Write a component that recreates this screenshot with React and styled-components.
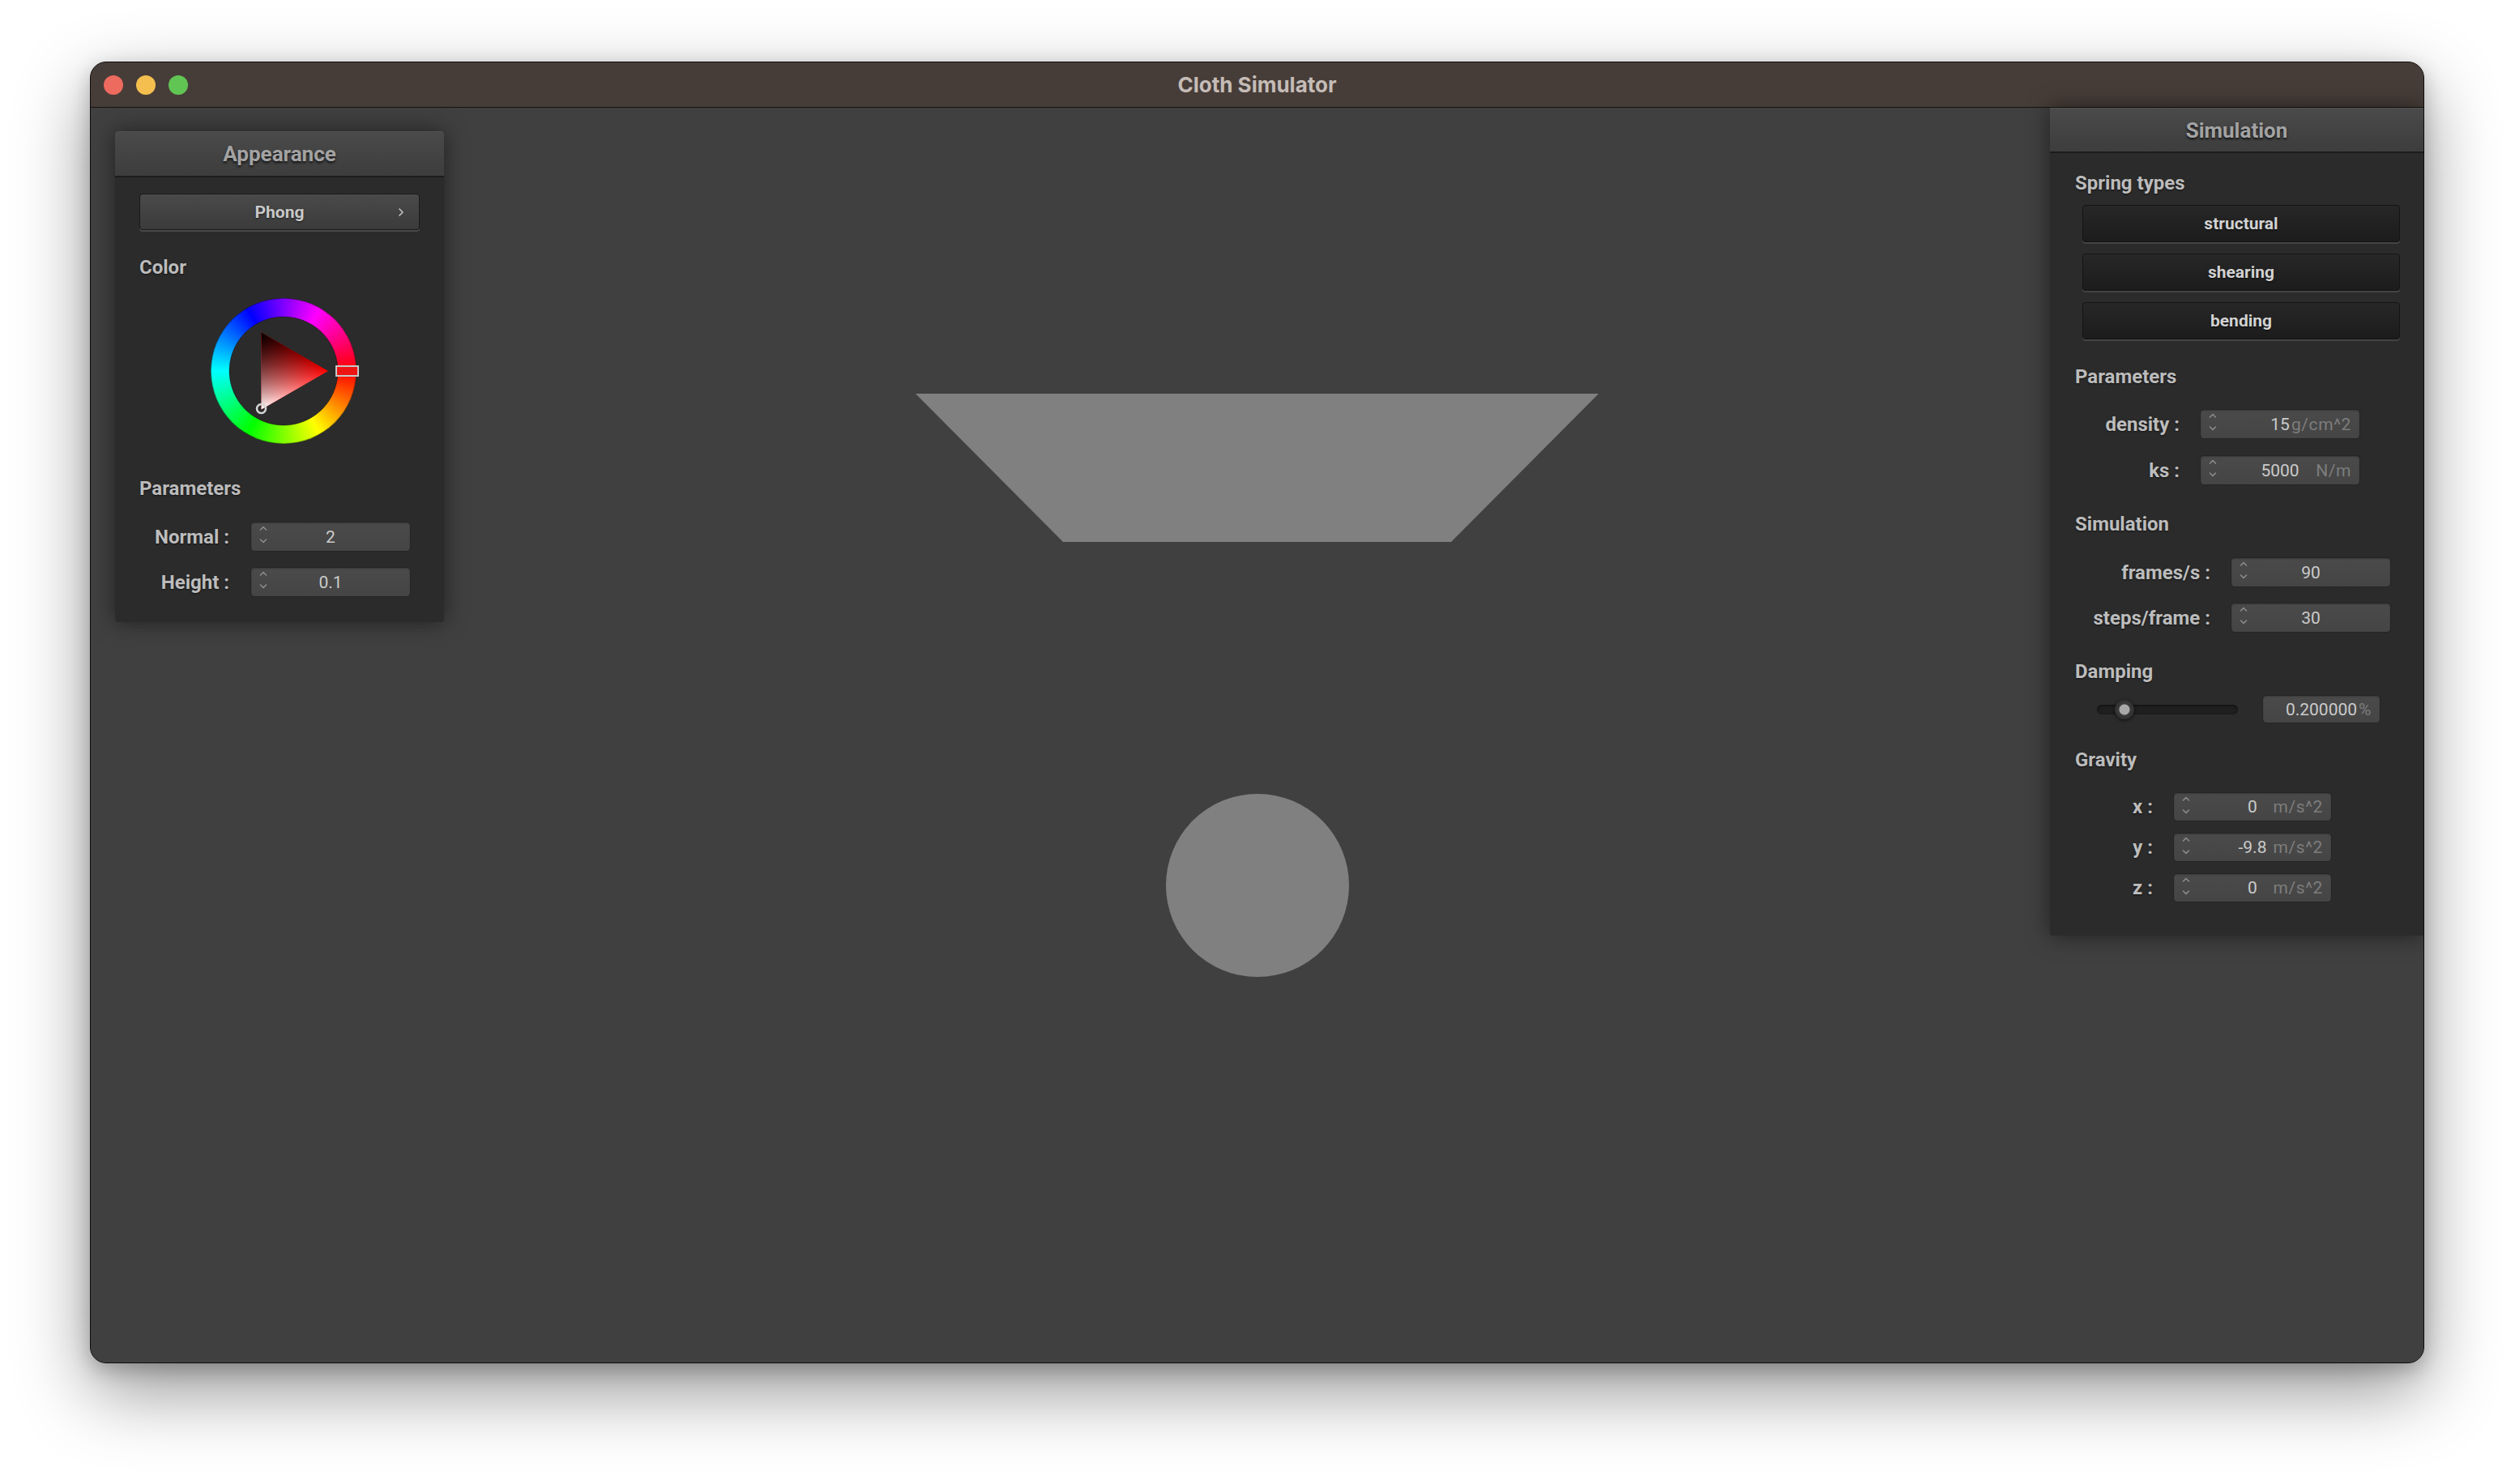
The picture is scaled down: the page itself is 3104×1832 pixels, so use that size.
import React from 'react';
import styled, {createGlobalStyle} from 'styled-components';

const GlobalStyle = createGlobalStyle`
  html, body {
    margin: 0;
    padding: 0;
    background: #ffffff;
    width: 3104px;
    height: 1832px;
    overflow: hidden;
  }
  * {
    box-sizing: border-box;
  }
`;

const Stage = styled.div`
  width: 3104px;
  height: 1832px;
  padding: 76px 0 0 111px;
`;

const Window = styled.div`
  width: 2881px;
  height: 1607px;
  display: flex;
  flex-direction: column;
  border: 1px solid #0e0c0b;
  border-radius: 20px;
  overflow: hidden;
  background: #404040;
  box-shadow: 0 34px 90px rgba(0, 0, 0, 0.42), 0 8px 24px rgba(0, 0, 0, 0.22);
`;

const TitleBar = styled.div`
  flex: none;
  height: 56px;
  display: grid;
  grid-template-columns: 1fr auto 1fr;
  align-items: center;
  padding: 0 16px;
  background: #473d38;
  border-bottom: 1px solid #161210;
`;

const Lights = styled.div`
  display: flex;
  gap: 16px;
`;

const Light = styled.span`
  width: 24px;
  height: 24px;
  border-radius: 50%;
  background: ${(p) => p.color};
`;

const Title = styled.div`
  font-family: Inter, 'Noto Sans', sans-serif;
  font-weight: 700;
  font-size: 26px;
  color: #c5bcb7;
`;

const Viewport = styled.div`
  flex: 1;
  position: relative;
  display: flex;
  justify-content: space-between;
  align-items: flex-start;
  background: #404040;
`;

const Scene = styled.svg`
  position: absolute;
  left: 0;
  top: 0;
`;

const Panel = styled.div`
  position: relative;
  z-index: 1;
  width: ${(p) => p.width}px;
  margin: ${(p) => p.margin};
  background: #2b2b2b;
  border-radius: ${(p) => p.radius};
  box-shadow: 0 0 28px rgba(0, 0, 0, 0.5);
  overflow: hidden;
  font-family: Roboto, 'Liberation Sans', sans-serif;
`;

const PanelHeader = styled.div`
  height: ${(p) => p.height}px;
  display: flex;
  align-items: center;
  justify-content: center;
  background: linear-gradient(#4a4a4a, #3d3d3d);
  border-top: 1px solid #525252;
  border-bottom: 2px solid #1c1c1c;
  font-weight: 700;
  font-size: 26px;
  color: #a3a3a3;
  text-shadow: 0 2px 3px rgba(0, 0, 0, 0.75);
`;

const PanelBody = styled.div`
  display: flex;
  flex-direction: column;
  padding-bottom: ${(p) => p.bottom}px;
`;

const GroupLabel = styled.div`
  margin-top: ${(p) => p.top}px;
  padding-left: ${(p) => p.left}px;
  height: 30px;
  line-height: 30px;
  font-weight: 700;
  font-size: 24px;
  color: #bcbcbc;
  text-shadow: 0 1px 2px rgba(0, 0, 0, 0.6);
`;

const ChoiceButton = styled.div`
  margin: 20px 30px 0 30px;
  height: 45px;
  display: grid;
  grid-template-columns: 1fr auto 1fr;
  align-items: center;
  padding: 0 18px;
  background: linear-gradient(#4a4a4a, #3b3b3b);
  border: 1px solid #1a1a1a;
  border-radius: 4px;
  box-shadow: 0 2px 0 #4a4a4a;
  font-weight: 700;
  font-size: 21px;
  color: #c9c9c9;
  text-shadow: 0 1px 2px rgba(0, 0, 0, 0.6);

  svg {
    justify-self: end;
  }
`;

const ToggleButton = styled.div`
  margin: ${(p) => p.top}px 29px 0 40px;
  height: 46px;
  display: flex;
  align-items: center;
  justify-content: center;
  background: linear-gradient(#272727, #1c1c1c);
  border: 1px solid #141414;
  border-radius: 4px;
  box-shadow: 0 2px 0 #444444;
  font-weight: 700;
  font-size: 21px;
  color: #d2d2d2;
  text-shadow: 0 1px 2px rgba(0, 0, 0, 0.7);
`;

const Row = styled.div`
  margin-top: ${(p) => p.top}px;
  display: grid;
  grid-template-columns: ${(p) => p.labelWidth}px ${(p) => p.fieldWidth}px;
  column-gap: ${(p) => p.gap}px;
  align-items: center;
`;

const RowLabel = styled.div`
  text-align: right;
  font-weight: 700;
  font-size: 24px;
  line-height: 30px;
  color: #bdbdbd;
  text-shadow: 0 1px 2px rgba(0, 0, 0, 0.6);
  white-space: nowrap;
`;

const Field = styled.div`
  height: ${(p) => p.height}px;
  display: grid;
  grid-template-columns: 1fr auto 1fr;
  align-items: center;
  padding: 0 10px;
  background: linear-gradient(#4a4a4a, #454545);
  border: 1px solid #252525;
  border-radius: 5px;
  box-shadow: inset 0 1px 2px rgba(0, 0, 0, 0.25);
  font-size: 21px;
  color: #cbcbcb;
`;

const Value = styled.span`
  white-space: nowrap;
`;

const Unit = styled.span`
  justify-self: end;
  color: #7d7d7d;
  letter-spacing: 0.6px;
  white-space: nowrap;
`;

const SliderRow = styled.div`
  margin-top: 14px;
  padding-left: 58px;
  display: flex;
  align-items: center;
  gap: 30px;
`;

const Track = styled.div`
  position: relative;
  width: 174px;
  height: 12px;
  border-radius: 6px;
  background: #1f1f1f;
  box-shadow: inset 0 1px 3px rgba(0, 0, 0, 0.6);
`;

const Knob = styled.div`
  position: absolute;
  top: 50%;
  left: ${(p) => p.at}px;
  width: 24px;
  height: 24px;
  margin: -12px 0 0 -12px;
  border-radius: 50%;
  background: radial-gradient(circle, #a8a8a8 0 6px, #3c3c3c 7px, #2e2e2e 12px);
  box-shadow: 0 1px 4px rgba(0, 0, 0, 0.7);
`;

const WheelBox = styled.div`
  position: relative;
  margin: 23px 0 0 118px;
  width: 180px;
  height: 180px;
`;

const HueRing = styled.div`
  position: absolute;
  inset: 0;
  border-radius: 50%;
  background: conic-gradient(from 90deg, #ff0000, #ffff00, #00ff00, #00ffff, #0000ff, #ff00ff, #ff0000);
  -webkit-mask: radial-gradient(circle, transparent 66.5px, #000 67.5px);
  mask: radial-gradient(circle, transparent 66.5px, #000 67.5px);
`;

const WheelOverlay = styled.svg`
  position: absolute;
  inset: 0;
  overflow: visible;
`;

function Spinner() {
  return (
    <svg width="10" height="22" viewBox="0 0 10 22" fill="none" stroke="#8c8c8c" strokeWidth="1.6" strokeLinecap="round" strokeLinejoin="round">
      <path d="M1.5 5 L5 1.5 L8.5 5" />
      <path d="M1.5 17 L5 20.5 L8.5 17" />
    </svg>
  );
}

function NumberField({value, unit, height = 37, spinner = true}) {
  return (
    <Field height={height}>
      <span>{spinner && <Spinner />}</span>
      <Value>{value}</Value>
      {unit ? <Unit>{unit}</Unit> : <span />}
    </Field>
  );
}

function ColorWheel() {
  const tip = [145, 90];
  const dark = [62.5, 42.4];
  const light = [62.5, 137.6];
  return (
    <WheelBox>
      <HueRing />
      <WheelOverlay width="180" height="180" viewBox="0 0 180 180">
        <defs>
          <linearGradient id="whiteFade" gradientUnits="userSpaceOnUse" x1={light[0]} y1={light[1]} x2="103.75" y2="66.2">
            <stop offset="0" stopColor="#ffffff" stopOpacity="1" />
            <stop offset="1" stopColor="#ffffff" stopOpacity="0" />
          </linearGradient>
          <linearGradient id="blackFade" gradientUnits="userSpaceOnUse" x1={dark[0]} y1={dark[1]} x2="103.75" y2="113.8">
            <stop offset="0" stopColor="#000000" stopOpacity="1" />
            <stop offset="1" stopColor="#000000" stopOpacity="0" />
          </linearGradient>
        </defs>
        <circle cx="90" cy="90" r="89.5" fill="none" stroke="rgba(0,0,0,0.35)" strokeWidth="1" />
        <circle cx="90" cy="90" r="67" fill="none" stroke="rgba(0,0,0,0.35)" strokeWidth="1" />
        <polygon points={`${tip} ${dark} ${light}`} fill="#ff0000" />
        <polygon points={`${tip} ${dark} ${light}`} fill="url(#whiteFade)" />
        <polygon points={`${tip} ${dark} ${light}`} fill="url(#blackFade)" />
        <circle cx={light[0]} cy={light[1] - 1} r="5.5" fill="none" stroke="#d6d6d6" strokeWidth="2.5" />
        <rect x="155" y="84" width="27" height="12" fill="#ee1414" stroke="#c8c8c8" strokeWidth="2" />
      </WheelOverlay>
    </WheelBox>
  );
}

function App() {
  return (
    <Stage>
      <GlobalStyle />
      <Window>
        <TitleBar>
          <Lights>
            <Light color="#ec6a5e" />
            <Light color="#f4bf4f" />
            <Light color="#61c554" />
          </Lights>
          <Title>Cloth Simulator</Title>
          <span />
        </TitleBar>

        <Viewport>
          <Scene width="2879" height="1549">
            <polygon points="1018,353 1861,353 1679,536 1200,536" fill="#808080" />
            <circle cx="1440" cy="960" r="113" fill="#808080" />
          </Scene>

          <Panel width={406} margin="29px 0 0 30px" radius="4px">
            <PanelHeader height={57}>Appearance</PanelHeader>
            <PanelBody bottom={31}>
              <ChoiceButton>
                <span />
                <span>Phong</span>
                <svg width="8" height="12" viewBox="0 0 8 12" fill="none" stroke="#c4c4c4" strokeWidth="1.6" strokeLinecap="round" strokeLinejoin="round">
                  <path d="M2 2 L6 6 L2 10" />
                </svg>
              </ChoiceButton>
              <GroupLabel top={31} left={30}>Color</GroupLabel>
              <ColorWheel />
              <GroupLabel top={40} left={30}>Parameters</GroupLabel>
              <Row top={26} labelWidth={141} fieldWidth={198} gap={26}>
                <RowLabel>Normal :</RowLabel>
                <NumberField value="2" />
              </Row>
              <Row top={19} labelWidth={141} fieldWidth={198} gap={26}>
                <RowLabel>Height :</RowLabel>
                <NumberField value="0.1" />
              </Row>
            </PanelBody>
          </Panel>

          <Panel width={461} margin="0" radius="0 0 0 4px">
            <PanelHeader height={56}>Simulation</PanelHeader>
            <PanelBody bottom={41}>
              <GroupLabel top={22} left={31}>Spring types</GroupLabel>
              <ToggleButton top={12}>structural</ToggleButton>
              <ToggleButton top={14}>shearing</ToggleButton>
              <ToggleButton top={14}>bending</ToggleButton>

              <GroupLabel top={31} left={31}>Parameters</GroupLabel>
              <Row top={25} labelWidth={160} fieldWidth={198} gap={25}>
                <RowLabel>density :</RowLabel>
                <NumberField value="15" unit="g/cm^2" />
              </Row>
              <Row top={20} labelWidth={160} fieldWidth={198} gap={25}>
                <RowLabel>ks :</RowLabel>
                <NumberField value="5000" unit="N/m" />
              </Row>

              <GroupLabel top={33} left={31}>Simulation</GroupLabel>
              <Row top={26} labelWidth={198} fieldWidth={198} gap={25}>
                <RowLabel>frames/s :</RowLabel>
                <NumberField value="90" />
              </Row>
              <Row top={19} labelWidth={198} fieldWidth={198} gap={25}>
                <RowLabel>steps/frame :</RowLabel>
                <NumberField value="30" />
              </Row>

              <GroupLabel top={33} left={31}>Damping</GroupLabel>
              <SliderRow>
                <Track>
                  <Knob at={34} />
                </Track>
                <div style={{width: 146}}>
                  <NumberField value="0.200000" unit="%" height={35} spinner={false} />
                </div>
              </SliderRow>

              <GroupLabel top={30} left={31}>Gravity</GroupLabel>
              <Row top={25} labelWidth={127} fieldWidth={196} gap={25}>
                <RowLabel>x :</RowLabel>
                <NumberField value="0" unit="m/s^2" height={36} />
              </Row>
              <Row top={14} labelWidth={127} fieldWidth={196} gap={25}>
                <RowLabel>y :</RowLabel>
                <NumberField value="-9.8" unit="m/s^2" height={36} />
              </Row>
              <Row top={14} labelWidth={127} fieldWidth={196} gap={25}>
                <RowLabel>z :</RowLabel>
                <NumberField value="0" unit="m/s^2" height={36} />
              </Row>
            </PanelBody>
          </Panel>
        </Viewport>
      </Window>
    </Stage>
  );
}

export default App;
